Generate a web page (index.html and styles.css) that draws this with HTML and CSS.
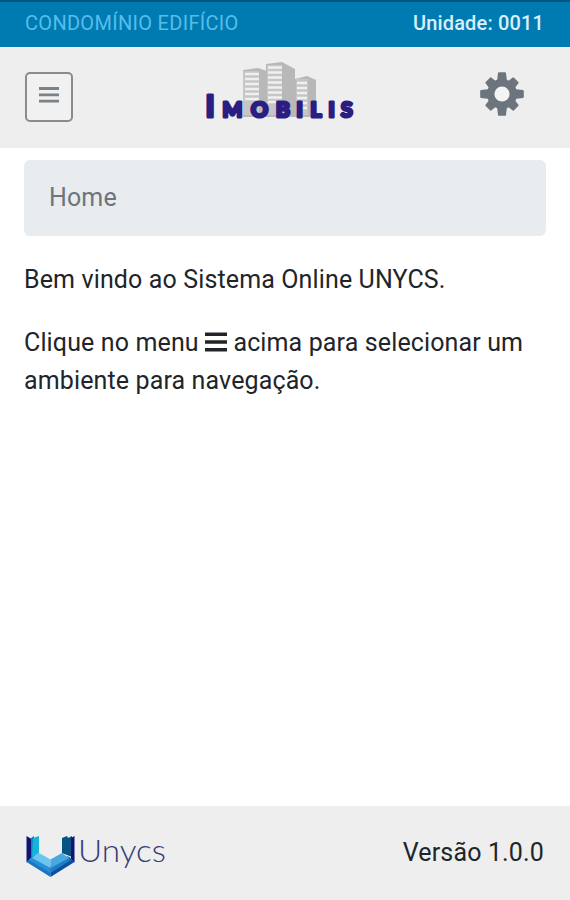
FILE: index.html
```html
<!DOCTYPE html>
<html lang="pt-BR">
<head>
    <meta charset="UTF-8" />
    <meta name="viewport" content="width=device-width, initial-scale=1.0"/>
    <title>Imobilis - Home</title>
    <link rel="stylesheet" href="styles.css">
</head>
<body>
    <div class="topbar">
        <span class="condominio">CONDOMÍNIO EDIFÍCIO</span>
        <span class="unidade">Unidade: 0011</span>
    </div>

    <header class="navbar">
        <button type="button" class="menu-btn" aria-label="Menu">
            <svg width="20" height="18" viewBox="0 0 20 18">
                <path d="M0 2.5h20M0 8.8h20M0 15.2h20" stroke="#7b8288" stroke-width="2.8" />
            </svg>
        </button>

        <svg class="logo" width="156" height="64" viewBox="202 60 156 64">
            <!-- buildings -->
            <path fill="#b8b8b8" d="M243 70l15-2 9 3v46h-24zM266 64l16-2 13 7v48h-29zM295 79l12-3 9 4v37h-21z" />
            <path fill="#c6c6c6" d="M243 71h16v44h-16zM267 65h15v50h-15zM296 79h12v36h-12z" />
            <path stroke="#f0f0f0" stroke-width="2.4" d="M245 74h14M245 79h14M245 84h14M245 89h14M245 94h14M245 99h14M268 67.5h14M268 72.5h14M268 77.5h14M268 82.5h14M268 87.5h14M268 92.5h14M268 97.5h14M268 102h14M297 83h10M297 88h10M297 93h10M297 98h10M297 103h10M297 108h10" />
            <text class="logo-text" y="117.3"><tspan class="logo-cap" x="205.6">I</tspan><tspan x="222.5 251 276 296.5 310.5 328.5 341">MOBILIS</tspan></text>
        </svg>

        <svg class="gear" width="44" height="44" viewBox="-22 -22 44 44">
            <g fill="#6c757d" stroke="#6c757d" stroke-width="2" stroke-linejoin="round">
                <path id="tooth" d="M-3.8-14L-3-20.8H3L3.8-14V14L3 20.8H-3L-3.8 14z" />
                <use href="#tooth" transform="rotate(45) scale(1 .92)" />
                <use href="#tooth" transform="rotate(90)" />
                <use href="#tooth" transform="rotate(135) scale(1 .92)" />
                <circle r="14" />
            </g>
            <circle r="7.6" fill="#f4f4f4" />
        </svg>
    </header>

    <main class="content">
        <nav class="breadcrumb">Home</nav>
        <p>Bem vindo ao Sistema Online UNYCS.</p>
        <p>Clique no menu <svg class="bars" width="22" height="20" viewBox="0 0 22 20"><path d="M0 2.3h22M0 10h22M0 17.7h22" stroke="#212529" stroke-width="3.4" /></svg> acima para selecionar um ambiente para navegação.</p>
    </main>

    <footer class="footer">
        <svg class="unycs" width="144" height="48" viewBox="24 832 144 48">
            <path fill="#101575" d="M26.5 836l5 3v19l-5 4.500z" />
            <path fill="#0a86bb" d="M31 838l3-2v20l-3 2z" />
            <path fill="#18b4d8" d="M33 838l6-2v17l-7 5z" />
            <path fill="#075384" d="M62 838l5-2 1 2 4-2v21l-10-4z" />
            <path fill="#101575" d="M71 838l3.500-2v26.500L71 859z" />
            <path fill="#1678c0" d="M26.500 862l5-5 19 10v10z" />
            <path fill="#0d4f9c" d="M50.500 867l19-10 5 5-24 15z" />
            <path fill="#278fd6" d="M29 860l4-4 17.500 9.500V873z" />
            <path fill="#1e7cc8" d="M50.500 865.500L68 856l3 4-20.500 13z" />
            <path fill="#6cc5ef" d="M32 858l7-5 11.500 6.500V868z" />
            <path fill="#48a8e0" d="M50.500 859.500L62 853l7 5-18.500 10z" />
            <text class="unycs-text" x="78" y="861.500" textLength="88" lengthAdjust="spacingAndGlyphs">Unycs</text>
        </svg>
        <span class="versao">Versão 1.0.0</span>
    </footer>
</body>
</html>
```
FILE: styles.css
```css
* {
    box-sizing: border-box;
    margin: 0;
    padding: 0;
}

body {
    font-family: Roboto, 'Liberation Sans', sans-serif;
    font-size: 25px;
    line-height: 38px;
    color: #212529;
    background: #fff;
    min-height: 100vh;
    display: flex;
    flex-direction: column;
}

.topbar {
    display: flex;
    justify-content: space-between;
    height: 47px;
    padding: 2px 26px 0 25px;
    font-size: 20px;
    line-height: 39px;
    background: #007bb2;
    border-top: 2px solid #00557f;
}

.condominio {
    color: #55bdec;
    letter-spacing: 0.3px;
}

.unidade {
    color: #d9effb;
    font-weight: 500;
    letter-spacing: 0.15px;
}

.navbar {
    display: flex;
    justify-content: space-between;
    height: 101px;
    padding: 12px 46px 0 25px;
    background: #eee;
    border-top: 1px solid #f8f8f8;
}

.menu-btn {
    width: 48px;
    height: 50px;
    margin-top: 12px;
    padding-bottom: 4px;
    display: flex;
    justify-content: center;
    align-items: center;
    background: #f1f1f1;
    border: 2px solid #868c92;
    border-radius: 5px;
}

.logo {
    margin-left: 6px;
}

.logo-text {
    font-family: Lato, sans-serif;
    font-weight: 700;
    font-size: 21px;
    fill: #2b1d82;
    stroke: #2b1d82;
    stroke-width: 3.2px;
    stroke-linejoin: round;
}

.logo-cap {
    font-size: 31px;
}

.gear {
    margin-top: 12px;
}

.content {
    flex: 1;
    padding: 12px 24px;
    letter-spacing: 0.13px;
}

.content p {
    margin-bottom: 25px;
}

.breadcrumb {
    height: 76px;
    margin-bottom: 25px;
    padding: 19px 25px;
    color: #6c757d;
    background: #e9ecef;
    border-radius: 6px;
}

.bars {
    vertical-align: -1px;
}

.footer {
    display: flex;
    justify-content: space-between;
    height: 94px;
    padding: 26px 26px 0 24px;
    background: #eee;
}

.unycs-text {
    font-family: Lato, sans-serif;
    font-weight: 300;
    font-size: 31px;
    fill: #343d78;
}

.versao {
    margin-top: 2px;
    letter-spacing: 0.15px;
}
```
